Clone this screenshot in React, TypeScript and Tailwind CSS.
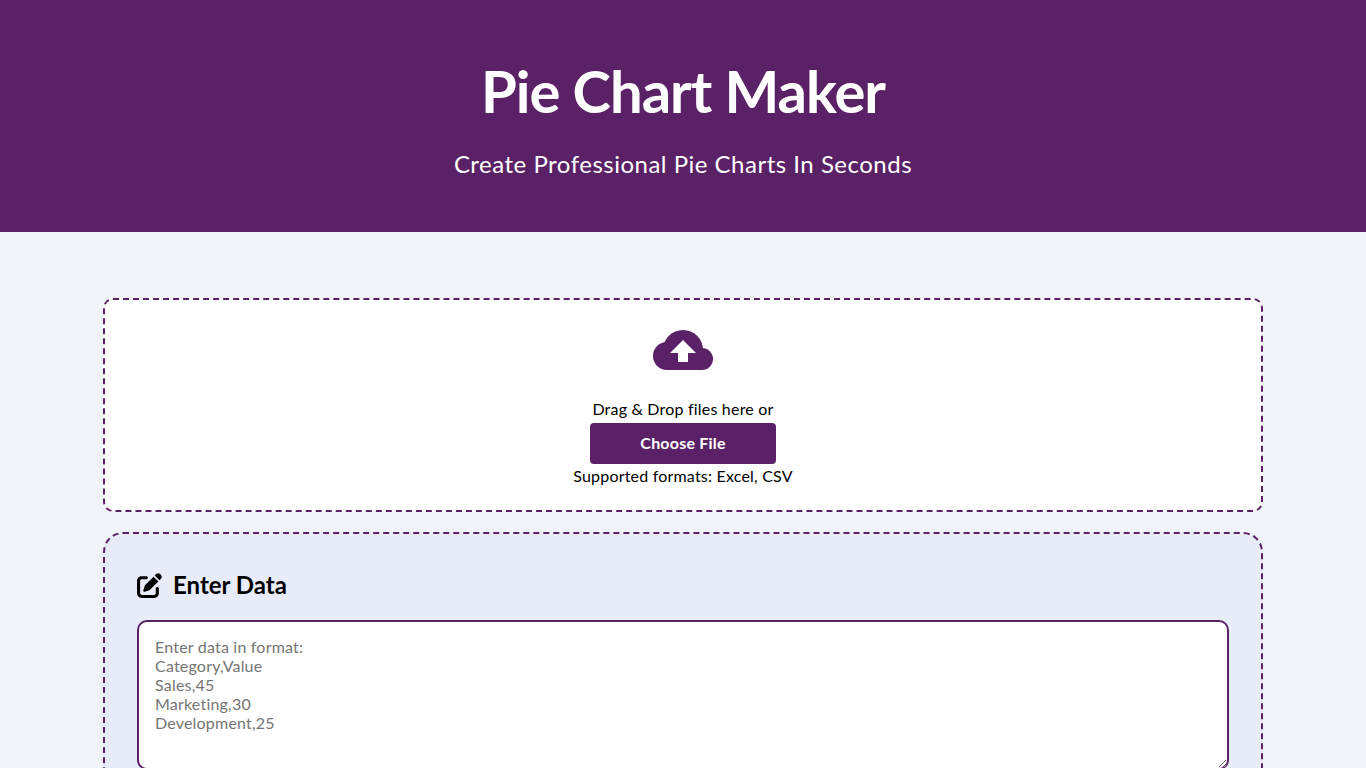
import { FaPenToSquare } from 'react-icons/fa6'

const PLACEHOLDER = `Enter data in format:
Category,Value
Sales,45
Marketing,30
Development,25`

function CloudUpload() {
  return (
    <svg viewBox="0 0 60 40" className="w-[60px] h-[40px]" aria-hidden>
      <circle cx="14" cy="26" r="14" fill="#5b2166" />
      <circle cx="30" cy="20" r="20" fill="#5b2166" />
      <circle cx="49" cy="29" r="11" fill="#5b2166" />
      <rect x="14" y="26" width="35" height="14" fill="#5b2166" />
      <path d="M30 10 L43 23 H35 V32 H25 V23 H17 Z" fill="#fff" />
    </svg>
  )
}

export default function App() {
  return (
    <div className="min-h-screen bg-[#f0f4f8] font-['Lato',sans-serif] text-black">
      {/* Header */}
      <header className="bg-[#5b2166] h-[232px] flex flex-col items-center text-white">
        <h1 className="mt-[51px] text-[58px] leading-[80px] font-bold tracking-[-1px]">Pie Chart Maker</h1>
        <p className="mt-[18px] text-[24px] leading-[30px] tracking-[0.5px]">Create Professional Pie Charts In Seconds</p>
      </header>

      <main className="w-[1160px] mx-auto pt-[66px] pb-10 flex flex-col gap-5">
        {/* Upload */}
        <section className="h-[214px] bg-white border-2 border-dashed border-[#5b2166] rounded-[10px] flex flex-col items-center pt-[30px] tracking-[0.2px]">
          <CloudUpload />
          <p className="mt-[29px] text-[16px] leading-[19px]">Drag &amp; Drop files here or</p>
          <button className="mt-[5px] w-[186px] h-[41px] pb-[2px] bg-[#5b2166] text-white rounded-[4px] text-[16px] font-bold">Choose File</button>
          <p className="mt-[2px] text-[16px] leading-[19px]">Supported formats: Excel, CSV</p>
        </section>

        {/* Data entry */}
        <section className="bg-[#e8ecf8] border-2 border-dashed border-[#5b2166] rounded-[20px] p-[32px]">
          <h2 className="flex items-center gap-[11px] h-[40px] text-[24px] font-bold -mt-px">
            <FaPenToSquare className="w-[25px] h-[25px]" />
            Enter Data
          </h2>
          <textarea
            className="block mt-[15px] w-full h-[150px] bg-white border-2 border-[#5b2166] rounded-[10px] px-[16px] pt-[15px] pb-[16px] text-[16px] leading-[19px] tracking-[0.2px] placeholder:text-[#757575] outline-none"
            placeholder={PLACEHOLDER}
          />
        </section>
      </main>
    </div>
  )
}
